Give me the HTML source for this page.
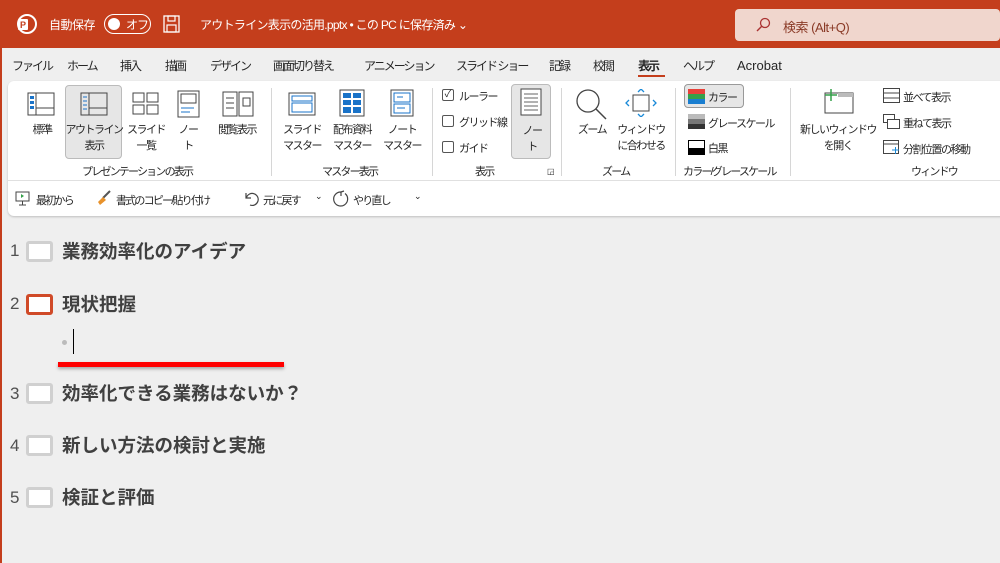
<!DOCTYPE html>
<html><head><meta charset="utf-8"><style>
*{margin:0;padding:0;box-sizing:border-box}
body{width:1000px;height:563px;overflow:hidden;background:#efefef;font-family:"Liberation Sans","Noto Sans CJK JP",sans-serif;position:relative;color:#262626}
.a{position:absolute;white-space:nowrap}
.t{font-size:11px;letter-spacing:-1.5px}
.c{text-align:center;font-size:11px;line-height:16px;letter-spacing:-1.5px}
.tab{position:absolute;top:57px;font-size:12px;letter-spacing:-2px;white-space:nowrap}
.sep{position:absolute;width:1px;background:#d6d6d6;top:88px;height:88px}
.grp{position:absolute;top:163px;font-size:11px;letter-spacing:-1.8px;text-align:center;white-space:nowrap}
.h{font-size:18.5px;font-weight:bold;color:#404040}
.n{font-size:17px;color:#505050}
.box{position:absolute;width:27px;height:21px;border-radius:3px;background:#fff;border:3px solid #d0d0d0}
.q{font-size:11px;letter-spacing:-1.8px}
</style></head><body>
<div class="a" style="left:0;top:0;width:1000px;height:48px;background:#c43e1c"></div>
<svg class="a" style="left:15px;top:13px" width="22" height="22"><circle cx="12" cy="11" r="9" fill="none" stroke="#fff" stroke-width="2"/><rect x="3" y="6" width="10" height="11" rx="1" fill="#fff"/><text x="5" y="15" font-size="9" font-weight="bold" fill="#c43e1c" font-family="Liberation Sans">P</text></svg>
<div class="a" style="left:49px;top:16px;color:#fff;font-size:12px;letter-spacing:-.5px">自動保存</div>
<div class="a" style="left:104px;top:14px;width:47px;height:20px;border:1.5px solid #fff;border-radius:10px"></div>
<div class="a" style="left:108px;top:18px;width:12px;height:12px;border-radius:6px;background:#fff"></div>
<div class="a" style="left:126px;top:16px;color:#fff;font-size:12px;letter-spacing:-1px">オフ</div>
<svg class="a" style="left:163px;top:15px" width="17" height="18"><rect x="1" y="1" width="15" height="16" fill="none" stroke="#fff" stroke-width="1.3"/><rect x="5" y="1" width="7" height="5" fill="none" stroke="#fff" stroke-width="1.2"/><rect x="4" y="10" width="9" height="7" fill="none" stroke="#fff" stroke-width="1.2"/></svg>
<div class="a" style="left:200px;top:16px;color:#fff;font-size:12px;letter-spacing:-0.7px">アウトライン表示の活用.pptx • この PC に保存済み ⌄</div>
<div class="a" style="left:735px;top:9px;width:265px;height:32px;background:#f0d6cd;border-radius:4px"></div>
<svg class="a" style="left:755px;top:17px" width="16" height="16"><circle cx="10" cy="6" r="4.5" fill="none" stroke="#a33" stroke-width="1.3"/><path d="M7 9 L2 14" stroke="#a33" stroke-width="1.4"/></svg>
<div class="a" style="left:783px;top:17px;font-size:13px;color:#8a3a26;letter-spacing:-.5px">検索 (Alt+Q)</div>
<div class="a" style="left:0;top:48px;width:2px;height:515px;background:#c43e1c"></div>
<div class="tab" style="left:12px">ファイル</div>
<div class="tab" style="left:67px">ホーム</div>
<div class="tab" style="left:120px">挿入</div>
<div class="tab" style="left:165px">描画</div>
<div class="tab" style="left:210px">デザイン</div>
<div class="tab" style="left:273px">画面切り替え</div>
<div class="tab" style="left:364px">アニメーション</div>
<div class="tab" style="left:456px">スライド ショー</div>
<div class="tab" style="left:549px">記録</div>
<div class="tab" style="left:593px">校閲</div>
<div class="tab" style="left:638px;font-weight:bold">表示</div>
<div class="a" style="left:638px;top:75px;width:27px;height:2px;background:#c43e1c"></div>
<div class="tab" style="left:683px">ヘルプ</div>
<div class="tab" style="left:737px;top:58px;letter-spacing:0;font-size:13px">Acrobat</div>
<div class="a" style="left:8px;top:81px;width:1000px;height:135px;background:#fff;border-radius:6px;box-shadow:0 1px 2px rgba(0,0,0,.2)"></div>
<div class="a" style="left:8px;top:180px;width:992px;height:1px;background:#e0e0e0"></div>
<div class="a" style="left:65px;top:85px;width:57px;height:74px;background:#e6e6e6;border:1px solid #bbb;border-radius:4px"></div>
<svg class="a" style="left:27px;top:92px" width="28" height="24"><rect x="1" y="1" width="26" height="22" fill="none" stroke="#444"/><line x1="9" y1="1" x2="9" y2="23" stroke="#444"/><line x1="9" y1="16" x2="27" y2="16" stroke="#444"/><rect x="3" y="4" width="4" height="3" fill="#1a73c8"/><rect x="3" y="9" width="4" height="3" fill="#1a73c8"/><rect x="3" y="14" width="4" height="3" fill="#1a73c8"/></svg>
<svg class="a" style="left:80px;top:92px" width="28" height="24"><rect x="1" y="1" width="26" height="22" fill="none" stroke="#444"/><line x1="9" y1="1" x2="9" y2="23" stroke="#444"/><line x1="9" y1="16" x2="27" y2="16" stroke="#444"/><path d="M3 5h4M3 9h4M3 13h4M3 17h4" stroke="#1a73c8"/></svg>
<svg class="a" style="left:132px;top:92px" width="28" height="24"><rect x="1" y="1" width="11" height="9" fill="none" stroke="#444"/><rect x="15" y="1" width="11" height="9" fill="none" stroke="#444"/><rect x="1" y="13" width="11" height="9" fill="none" stroke="#444"/><rect x="15" y="13" width="11" height="9" fill="none" stroke="#444"/></svg>
<svg class="a" style="left:177px;top:90px" width="24" height="28"><rect x="1" y="1" width="21" height="26" fill="none" stroke="#444"/><rect x="4" y="4" width="15" height="9" fill="none" stroke="#444"/><path d="M4 18h13M4 22h9" stroke="#1a73c8"/></svg>
<svg class="a" style="left:222px;top:90px" width="32" height="28"><path d="M1 2h14v24H1zM17 2h14v24H17z" fill="none" stroke="#444"/><path d="M4 8h8M4 13h8M4 18h8M21 8h7v8h-7z" stroke="#444" fill="none"/></svg>
<div class="a c" style="left:20px;top:122px;width:44px">標準</div>
<div class="a c" style="left:64px;top:122px;width:60px">アウトライン<br>表示</div>
<div class="a c" style="left:124px;top:122px;width:44px">スライド<br>一覧</div>
<div class="a c" style="left:172px;top:122px;width:32px">ノー<br>ト</div>
<div class="a c" style="left:208px;top:122px;width:58px">閲覧表示</div>
<div class="grp" style="left:82px">プレゼンテーションの表示</div>
<div class="sep" style="left:271px"></div>
<svg class="a" style="left:288px;top:92px" width="28" height="24"><rect x="1" y="1" width="26" height="22" fill="none" stroke="#444"/><rect x="4" y="4" width="20" height="5" fill="none" stroke="#1a73c8"/><rect x="4" y="11" width="20" height="9" fill="none" stroke="#1a73c8"/></svg>
<svg class="a" style="left:339px;top:89px" width="26" height="28"><rect x="1" y="1" width="24" height="26" fill="none" stroke="#444"/><g fill="#1a73c8"><rect x="4" y="4" width="8" height="5"/><rect x="14" y="4" width="8" height="5"/><rect x="4" y="11" width="8" height="5"/><rect x="14" y="11" width="8" height="5"/><rect x="4" y="18" width="8" height="6"/><rect x="14" y="18" width="8" height="6"/></g></svg>
<svg class="a" style="left:390px;top:89px" width="24" height="28"><rect x="1" y="1" width="22" height="26" fill="none" stroke="#444"/><rect x="4" y="4" width="16" height="9" fill="none" stroke="#1a73c8"/><rect x="4" y="15" width="16" height="9" fill="none" stroke="#1a73c8"/><path d="M7 8h6M7 19h8" stroke="#1a73c8"/></svg>
<div class="a c" style="left:278px;top:122px;width:48px">スライド<br>マスター</div>
<div class="a c" style="left:324px;top:122px;width:56px">配布資料<br>マスター</div>
<div class="a c" style="left:378px;top:122px;width:48px">ノート<br>マスター</div>
<div class="grp" style="left:322px">マスター表示</div>
<div class="sep" style="left:432px"></div>
<div class="a" style="left:442px;top:89px;width:12px;height:12px;border:1px solid #555;border-radius:2px;font-size:10px;line-height:10px;text-align:center">✓</div>
<div class="a" style="left:442px;top:115px;width:12px;height:12px;border:1px solid #555;border-radius:2px"></div>
<div class="a" style="left:442px;top:141px;width:12px;height:12px;border:1px solid #555;border-radius:2px"></div>
<div class="a t" style="left:459px;top:88px">ルーラー</div>
<div class="a t" style="left:459px;top:114px">グリッド線</div>
<div class="a t" style="left:459px;top:140px">ガイド</div>
<div class="a" style="left:511px;top:84px;width:40px;height:75px;background:#e6e6e6;border:1px solid #bbb;border-radius:4px"></div>
<svg class="a" style="left:520px;top:88px" width="22" height="28"><rect x="1" y="1" width="20" height="26" fill="#fff" stroke="#444"/><path d="M4 6h14M4 10h14M4 14h14M4 18h14M4 22h14" stroke="#666"/></svg>
<div class="a c" style="left:514px;top:123px;width:36px">ノー<br>ト</div>
<div class="grp" style="left:475px">表示</div>
<div class="a" style="left:547px;top:167px;font-size:8px">◲</div>
<div class="sep" style="left:561px"></div>
<svg class="a" style="left:574px;top:88px" width="34" height="32"><circle cx="14" cy="13" r="11" fill="none" stroke="#444" stroke-width="1.3"/><path d="M22 21 L32 31" stroke="#444" stroke-width="1.5"/></svg>
<svg class="a" style="left:624px;top:89px" width="34" height="28"><rect x="9" y="6" width="16" height="16" fill="none" stroke="#444"/><path d="M14 3 L17 0 L20 3M14 25 L17 28 L20 25M5 11 L2 14 L5 17M29 11 L32 14 L29 17" fill="none" stroke="#1a8ad8" stroke-width="1.3"/></svg>
<div class="a c" style="left:570px;top:122px;width:44px">ズーム</div>
<div class="a c" style="left:612px;top:122px;width:58px">ウィンドウ<br>に合わせる</div>
<div class="grp" style="left:602px">ズーム</div>
<div class="sep" style="left:675px"></div>
<div class="a" style="left:684px;top:84px;width:60px;height:24px;background:#e6e6e6;border:1px solid #999;border-radius:4px"></div>
<svg class="a" style="left:688px;top:89px" width="17" height="15"><rect width="17" height="5" fill="#e8413a"/><rect y="5" width="17" height="5" fill="#35a04a"/><rect y="10" width="17" height="5" fill="#1a7ed0"/></svg>
<div class="a t" style="left:708px;top:89px">カラー</div>
<svg class="a" style="left:688px;top:114px" width="17" height="15"><rect width="17" height="5" fill="#bbb"/><rect y="5" width="17" height="5" fill="#777"/><rect y="10" width="17" height="5" fill="#333"/></svg>
<div class="a t" style="left:708px;top:115px">グレースケール</div>
<svg class="a" style="left:688px;top:140px" width="17" height="15"><rect x=".5" y=".5" width="16" height="14" fill="#fff" stroke="#000"/><rect y="8" width="17" height="7" fill="#000"/></svg>
<div class="a t" style="left:708px;top:140px">白黒</div>
<div class="grp" style="left:683px">カラー/グレースケール</div>
<div class="sep" style="left:790px"></div>
<svg class="a" style="left:822px;top:88px" width="32" height="26"><rect x="3" y="5" width="28" height="20" fill="none" stroke="#444"/><rect x="16" y="5" width="15" height="4" fill="#bbb"/><path d="M9 1v12M3 7h12" stroke="#35a04a" stroke-width="1.5"/></svg>
<div class="a c" style="left:796px;top:122px;width:84px">新しいウィンドウ<br>を開く</div>
<svg class="a" style="left:883px;top:88px" width="17" height="15"><rect x=".5" y=".5" width="16" height="14" fill="none" stroke="#444"/><path d="M0 5h17M0 10h17" stroke="#444"/></svg>
<svg class="a" style="left:883px;top:114px" width="17" height="15"><rect x=".5" y=".5" width="11" height="8" fill="none" stroke="#444"/><rect x="4.5" y="5.5" width="12" height="9" fill="#fff" stroke="#444"/></svg>
<svg class="a" style="left:883px;top:140px" width="17" height="15"><rect x=".5" y=".5" width="15" height="13" fill="none" stroke="#444"/><path d="M0 4h16" stroke="#444"/><path d="M9 10h7M12.5 7v7" stroke="#1a8ad8"/></svg>
<div class="a t" style="left:903px;top:89px">並べて表示</div>
<div class="a t" style="left:903px;top:115px">重ねて表示</div>
<div class="a t" style="left:903px;top:141px">分割位置の移動</div>
<div class="grp" style="left:911px">ウィンドウ</div>
<svg class="a" style="left:15px;top:191px" width="15" height="15"><rect x="1" y="1" width="13" height="9" fill="none" stroke="#444"/><path d="M7.5 10v4M4 14h7" stroke="#444"/><path d="M6 3l3 2-3 2z" fill="#35a04a"/></svg>
<div class="a q" style="left:36px;top:192px">最初から</div>
<svg class="a" style="left:96px;top:190px" width="16" height="16"><path d="M14 1 L7 8" stroke="#555" stroke-width="2"/><path d="M7 7 L2 12 L4 15 L10 10z" fill="#e8922b"/></svg>
<div class="a q" style="left:116px;top:192px">書式のコピー/貼り付け</div>
<svg class="a" style="left:243px;top:190px" width="16" height="17"><path d="M3 3 L3 8 L8 8M3.5 7.5 A6 6 0 1 1 7 15" fill="none" stroke="#444" stroke-width="1.2"/></svg>
<div class="a q" style="left:263px;top:192px">元に戻す</div>
<div class="a" style="left:315px;top:191px;font-size:9px">⌄</div>
<svg class="a" style="left:332px;top:190px" width="18" height="18"><path d="M9 2 A7 7 0 1 0 13 3.5 M9 2 L9 6 M9 2 L12 1" fill="none" stroke="#444" stroke-width="1.2"/></svg>
<div class="a q" style="left:353px;top:192px">やり直し</div>
<div class="a" style="left:414px;top:191px;font-size:9px">⌄</div>
<div class="a n" style="left:10px;top:241px">1</div><div class="box" style="left:26px;top:241px"></div><div class="a h" style="left:62px;top:238px">業務効率化のアイデア</div>
<div class="a n" style="left:10px;top:294px">2</div><div class="box" style="left:26px;top:294px;border-color:#d04a28"></div><div class="a h" style="left:62px;top:291px">現状把握</div>
<div class="a" style="left:62px;top:340px;width:5px;height:5px;border-radius:3px;background:#bbb"></div>
<div class="a" style="left:73px;top:329px;width:1px;height:25px;background:#000"></div>
<div class="a" style="left:58px;top:362px;width:226px;height:5px;background:#f00;box-shadow:0 2px 3px rgba(0,0,0,.3)"></div>
<div class="a n" style="left:10px;top:384px">3</div><div class="box" style="left:26px;top:383px"></div><div class="a h" style="left:62px;top:380px">効率化できる業務はないか？</div>
<div class="a n" style="left:10px;top:436px">4</div><div class="box" style="left:26px;top:435px"></div><div class="a h" style="left:62px;top:432px">新しい方法の検討と実施</div>
<div class="a n" style="left:10px;top:488px">5</div><div class="box" style="left:26px;top:487px"></div><div class="a h" style="left:62px;top:484px">検証と評価</div>
</body></html>
